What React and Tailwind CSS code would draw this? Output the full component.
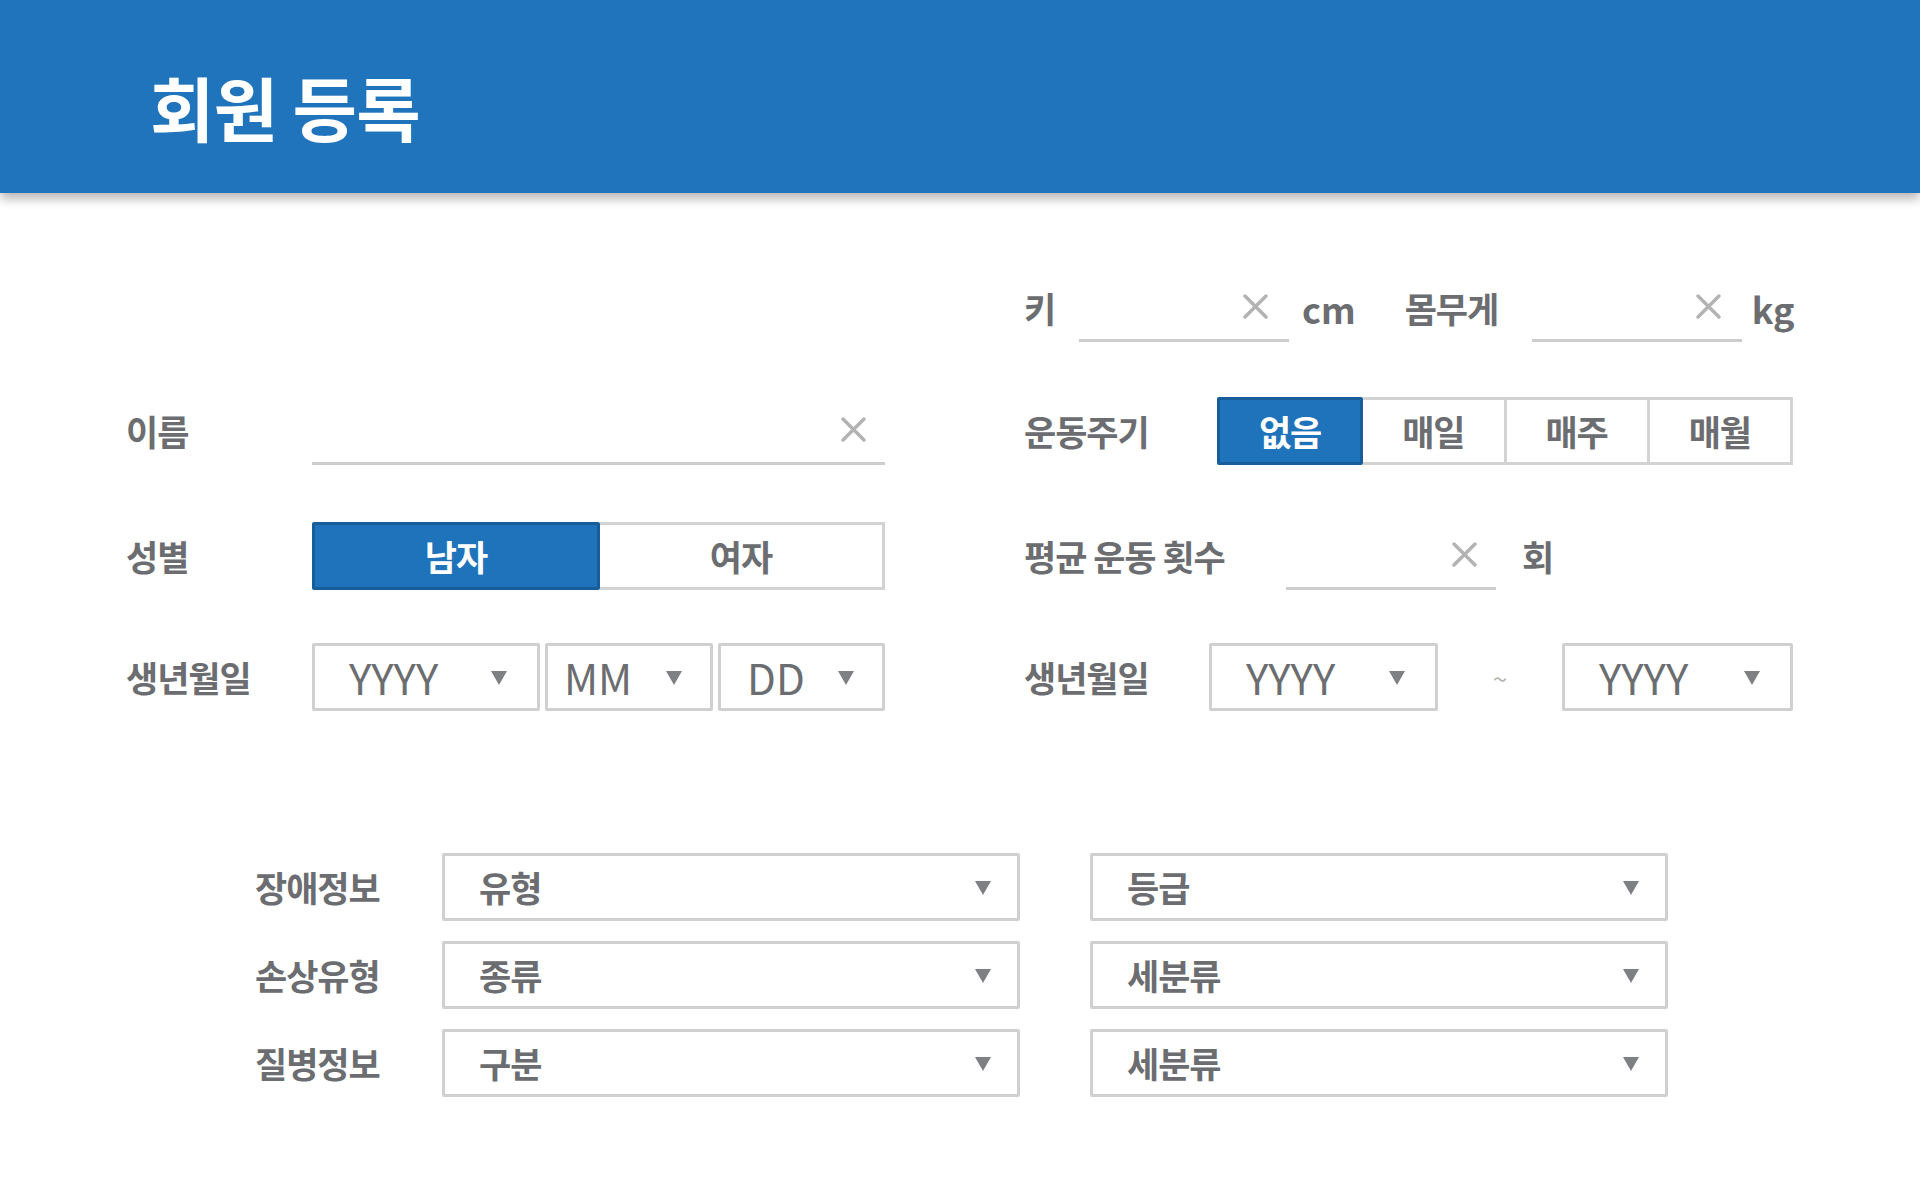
import { useState } from "react";

const font = { fontFamily: '"Noto Sans CJK KR", "Noto Sans", sans-serif' };

const Clear = () => (
  <svg width="27" height="27" viewBox="0 0 27 27" className="shrink-0">
    <path d="M3 3 L24 24 M24 3 L3 24" stroke="#b3b3b3" strokeWidth="3.5" strokeLinecap="round" />
  </svg>
);

const Caret = () => (
  <svg width="16" height="15" viewBox="0 0 16 15" className="shrink-0">
    <polygon points="0,1 16,1 8,15" fill="#7f8084" />
  </svg>
);

const Label = ({ children, className = "" }) => (
  <span className={`shrink-0 text-[35px] font-bold tracking-[-0.03em] text-[#6b6d71] ${className}`}>{children}</span>
);

const Underline = ({ className = "" }) => (
  <div className={`flex h-[68px] shrink-0 items-center justify-end border-b-[3px] border-[#cdcdcd] pr-[18px] ${className}`}>
    <Clear />
  </div>
);

const Select = ({ text, className = "", textClass = "text-[42px] leading-none" }) => (
  <div className={`flex h-[68px] shrink-0 items-center justify-between rounded-[2px] border-[3px] border-[#d0d0d0] bg-white ${className}`}>
    <span className={`text-[#6b6d71] ${textClass}`}>{text}</span>
    <Caret />
  </div>
);

const Toggle = ({ options, value, onChange, className = "" }) => (
  <div className={`flex h-[68px] shrink-0 ${className}`}>
    {options.map((option) => {
      const active = option === value;
      return (
        <button
          key={option}
          type="button"
          onClick={() => onChange(option)}
          className={`flex flex-1 items-center justify-center text-[35px] font-bold tracking-[-0.03em] ${
            active
              ? "rounded-[2px] border-[3px] border-[#175d9c] bg-[#1e73bb] text-white"
              : "border-y-[3px] border-r-[3px] border-[#d3d3d3] bg-white text-[#6b6d71]"
          }`}
        >
          {option}
        </button>
      );
    })}
  </div>
);

const Row = ({ children, className = "" }) => (
  <div className={`flex h-[68px] items-center ${className}`}>{children}</div>
);

export default function App() {
  const [gender, setGender] = useState("남자");
  const [cycle, setCycle] = useState("없음");

  return (
    <div className="min-h-screen w-[1920px] bg-white" style={font}>
      <header className="relative z-10 flex h-[193px] items-center bg-[#1f74bb] pl-[150px] pt-[20px] shadow-[0_6px_10px_rgba(0,0,0,0.28)]">
        <h1 className="text-[70px] font-bold leading-none tracking-[-0.01em] text-white">회원 등록</h1>
      </header>

      <main className="pt-[81px]">
        <div className="flex">
          {/* left column */}
          <div className="flex w-[898px] flex-col pl-[126px] pt-[123px]">
            <Row>
              <Label className="w-[186px]">이름</Label>
              <Underline className="w-[573px]" />
            </Row>
            <Row className="mt-[57px]">
              <Label className="w-[186px]">성별</Label>
              <Toggle options={["남자", "여자"]} value={gender} onChange={setGender} className="w-[573px]" />
            </Row>
            <Row className="mt-[53px]">
              <Label className="w-[186px]">생년월일</Label>
              <div className="flex w-[573px] gap-[5px]">
                <Select text="YYYY" className="w-[228px] pl-[34px] pr-[30px]" />
                <Select text="MM" className="w-[168px] pl-[16px] pr-[28px]" />
                <Select text="DD" className="w-[167px] pl-[26px] pr-[28px]" />
              </div>
            </Row>
          </div>

          {/* right column */}
          <div className="flex flex-col pl-[126px]">
            <Row>
              <Label className="w-[55px]">키</Label>
              <Underline className="w-[210px] pr-[20px]" />
              <span className="ml-[13px] shrink-0 text-[36px] font-bold text-[#6b6d71]">cm</span>
              <Label className="ml-[49px] w-[127px]">몸무게</Label>
              <Underline className="w-[210px] pr-[20px]" />
              <span className="ml-[10px] shrink-0 text-[36px] font-bold text-[#6b6d71]">kg</span>
            </Row>
            <Row className="mt-[55px]">
              <Label className="w-[193px]">운동주기</Label>
              <Toggle options={["없음", "매일", "매주", "매월"]} value={cycle} onChange={setCycle} className="w-[576px]" />
            </Row>
            <Row className="mt-[57px]">
              <Label className="w-[262px]">평균 운동 횟수</Label>
              <Underline className="w-[210px]" />
              <Label className="ml-[26px]">회</Label>
            </Row>
            <Row className="mt-[53px]">
              <Label className="w-[185px]">생년월일</Label>
              <Select text="YYYY" className="w-[229px] pl-[34px] pr-[30px]" />
              <span className="w-[124px] shrink-0 text-center text-[26px] text-[#b3b3b3]">~</span>
              <Select text="YYYY" className="w-[231px] pl-[34px] pr-[30px]" />
            </Row>
          </div>
        </div>

        <div className="mt-[142px] flex flex-col gap-[20px] pl-[255px]">
          {[
            ["장애정보", "유형", "등급"],
            ["손상유형", "종류", "세분류"],
            ["질병정보", "구분", "세분류"],
          ].map(([label, left, right]) => (
            <div key={label} className="flex items-center">
              <Label className="w-[187px]">{label}</Label>
              <Select text={left} textClass="text-[35px] font-bold tracking-[-0.03em]" className="w-[578px] pl-[34px] pr-[26px]" />
              <Select text={right} textClass="text-[35px] font-bold tracking-[-0.03em]" className="ml-[70px] w-[578px] pl-[34px] pr-[26px]" />
            </div>
          ))}
        </div>
      </main>
    </div>
  );
}
